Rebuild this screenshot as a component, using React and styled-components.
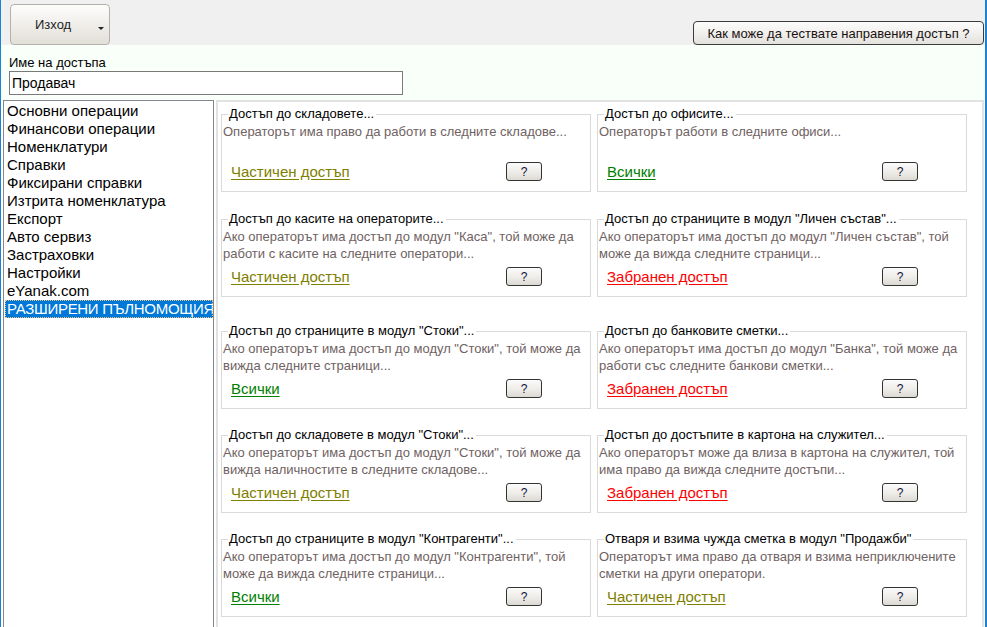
import React from 'react';
import styled, { createGlobalStyle } from 'styled-components';

const GlobalStyle = createGlobalStyle`
  html, body {
    margin: 0;
    padding: 0;
    background: #ffffff;
    font-family: 'Liberation Sans', Arial, sans-serif;
  }
`;

const Window = styled.div`
  width: 987px;
  height: 627px;
  box-sizing: border-box;
  border-left: 1px solid #1883d7;
  border-right: 2px solid #1883d7;
  display: flex;
  flex-direction: column;
  overflow: hidden;
  background: #ffffff;
`;

const Toolbar = styled.div`
  height: 45px;
  flex: none;
  background: #f0f0f0;
  display: flex;
  align-items: flex-start;
  justify-content: space-between;
  padding: 4px 1px 0 9px;
  box-sizing: border-box;
`;

const ExitButton = styled.button`
  width: 100px;
  height: 41px;
  border: 1px solid #b4b1aa;
  border-radius: 4px;
  background: linear-gradient(#fdfdfc 0%, #f3f1ee 40%, #e2dfd8 100%);
  font-family: 'Liberation Sans', Arial, sans-serif;
  font-size: 13px;
  color: #1e1e1e;
  display: flex;
  align-items: center;
  padding: 0 5px 0 24px;
  gap: 27px;
`;

const Caret = styled.span`
  width: 0;
  height: 0;
  margin-top: 8px;
  border-left: 3px solid transparent;
  border-right: 3px solid transparent;
  border-top: 3px solid #222;
`;

const HelpButton = styled.button`
  margin-top: 17px;
  width: 291px;
  height: 24px;
  border: 1px solid #3c3c3c;
  border-radius: 4px;
  background: linear-gradient(#fcfcfc 0%, #f1f0ed 50%, #e3e1dc 100%);
  font-family: 'Liberation Sans', Arial, sans-serif;
  font-size: 13px;
  color: #1a1010;
  padding: 0;
`;

const NameArea = styled.div`
  height: 55px;
  flex: none;
  background: #f9fff9;
  padding: 10px 0 0 8px;
  box-sizing: border-box;
`;

const NameLabel = styled.div`
  font-size: 13px;
  line-height: 16px;
  color: #000;
`;

const NameInput = styled.div`
  width: 394px;
  height: 24px;
  box-sizing: border-box;
  border: 1px solid #7a7a7a;
  background: #fff;
  font-size: 14px;
  line-height: 22px;
  padding-left: 2px;
  color: #000;
`;

const Body = styled.div`
  flex: 1;
  display: flex;
  gap: 2px;
  padding-left: 2px;
  min-height: 0;
`;

const MenuList = styled.div`
  width: 211px;
  flex: none;
  box-sizing: border-box;
  border: 1px solid #828790;
  border-bottom: none;
  background: #fff;
  padding: 1px 0 0 1px;
`;

const MenuItem = styled.div`
  height: 18px;
  line-height: 18px;
  font-size: 15px;
  padding-left: 2px;
  white-space: nowrap;
  overflow: hidden;
  letter-spacing: ${p => (p.$active ? '-0.3px' : '0')};
  color: ${p => (p.$active ? '#ffffff' : '#000000')};
  background: ${p => (p.$active ? '#0078d7' : 'transparent')};
  outline: ${p => (p.$active ? '1px dotted #f0c080' : 'none')};
  outline-offset: -1px;
`;

const RightPanel = styled.div`
  width: 768px;
  flex: none;
  box-sizing: border-box;
  border: 2px solid #e2e2e2;
  border-bottom: none;
  background: #fff;
  padding: 4px 0 0 3px;
`;

const CardGrid = styled.div`
  display: grid;
  grid-template-columns: 370px 370px;
  column-gap: 6px;
  row-gap: 18px;
`;

const Card = styled.fieldset`
  margin: ${p => p.$extra}px 0 0 0;
  padding: 0 0 10px 1px;
  border: 1px solid #dadada;
  min-width: 0;
`;

const Legend = styled.legend`
  margin-left: 5px;
  padding: 0 2px 0 1px;
  font-size: 13px;
  line-height: 16px;
  color: #000;
`;

const Desc = styled.div`
  height: 34px;
  font-size: 13px;
  line-height: 17px;
  color: #6f6262;
  padding-top: 1px;
  padding-right: 4px;
`;

const LinkRow = styled.div`
  margin-top: 5px;
  height: 19px;
  display: flex;
  align-items: center;
  justify-content: space-between;
  padding: 0 48px 0 8px;
`;

const accessColors = {
  partial: '#808000',
  all: '#008000',
  denied: '#ff0000',
};

const AccessLink = styled.span`
  font-size: 15px;
  color: ${p => accessColors[p.$kind]};
  text-decoration: underline;
  text-underline-offset: 2px;
`;

const QButton = styled.button`
  width: 36px;
  height: 19px;
  padding: 0;
  border: 1px solid #333;
  border-radius: 3px;
  background: linear-gradient(#fbfbfb 0%, #eeece8 55%, #dddad4 100%);
  font-family: 'Liberation Sans', Arial, sans-serif;
  font-size: 12px;
  line-height: 16px;
  color: #101040;
`;

const menu = [
  'Основни операции',
  'Финансови операции',
  'Номенклатури',
  'Справки',
  'Фиксирани справки',
  'Изтрита номенклатура',
  'Експорт',
  'Авто сервиз',
  'Застраховки',
  'Настройки',
  'eYanak.com',
  'РАЗШИРЕНИ ПЪЛНОМОЩИЯ',
];

const labels = {
  partial: 'Частичен достъп',
  all: 'Всички',
  denied: 'Забранен достъп',
};

const cards = [
  { title: 'Достъп до складовете...', text: 'Операторът има право да работи в следните складове...', access: 'partial' },
  { title: 'Достъп до офисите...', text: 'Операторът работи в следните офиси...', access: 'all' },
  { title: 'Достъп до касите на операторите...', text: 'Ако операторът има достъп до модул "Каса", той може да работи с касите на следните оператори...', access: 'partial', extra: 1 },
  { title: 'Достъп до страниците в модул "Личен състав"...', text: 'Ако операторът има достъп до модул "Личен състав", той може да вижда следните страници...', access: 'denied', extra: 1 },
  { title: 'Достъп до страниците в модул "Стоки"...', text: 'Ако операторът има достъп до модул "Стоки", той може да вижда следните страници...', access: 'all', extra: 8 },
  { title: 'Достъп до банковите сметки...', text: 'Ако операторът има достъп до модул "Банка", той може да работи със следните банкови сметки...', access: 'denied', extra: 8 },
  { title: 'Достъп до складовете в модул "Стоки"...', text: 'Ако операторът има достъп до модул "Стоки", той може да вижда наличностите в следните складове...', access: 'partial' },
  { title: 'Достъп до достъпите в картона на служител...', text: 'Ако операторът може да влиза в картона на служител, той има право да вижда следните достъпи...', access: 'denied' },
  { title: 'Достъп до страниците в модул "Контрагенти"...', text: 'Ако операторът има достъп до модул "Контрагенти", той може да вижда следните страници...', access: 'all' },
  { title: 'Отваря и взима чужда сметка в модул "Продажби"', text: 'Операторът има право да отваря и взима неприключените сметки на други оператори.', access: 'partial' },
];

const App = () => (
  <Window>
    <GlobalStyle />
    <Toolbar>
      <ExitButton>
        Изход
        <Caret />
      </ExitButton>
      <HelpButton>Как може да тествате направения достъп ?</HelpButton>
    </Toolbar>
    <NameArea>
      <NameLabel>Име на достъпа</NameLabel>
      <NameInput>Продавач</NameInput>
    </NameArea>
    <Body>
      <MenuList>
        {menu.map((item, i) => (
          <MenuItem key={item} $active={i === menu.length - 1}>{item}</MenuItem>
        ))}
      </MenuList>
      <RightPanel>
        <CardGrid>
          {cards.map(c => (
            <Card key={c.title} $extra={c.extra || 0}>
              <Legend>{c.title}</Legend>
              <Desc>{c.text}</Desc>
              <LinkRow>
                <AccessLink $kind={c.access}>{labels[c.access]}</AccessLink>
                <QButton>?</QButton>
              </LinkRow>
            </Card>
          ))}
        </CardGrid>
      </RightPanel>
    </Body>
  </Window>
);

export default App;
